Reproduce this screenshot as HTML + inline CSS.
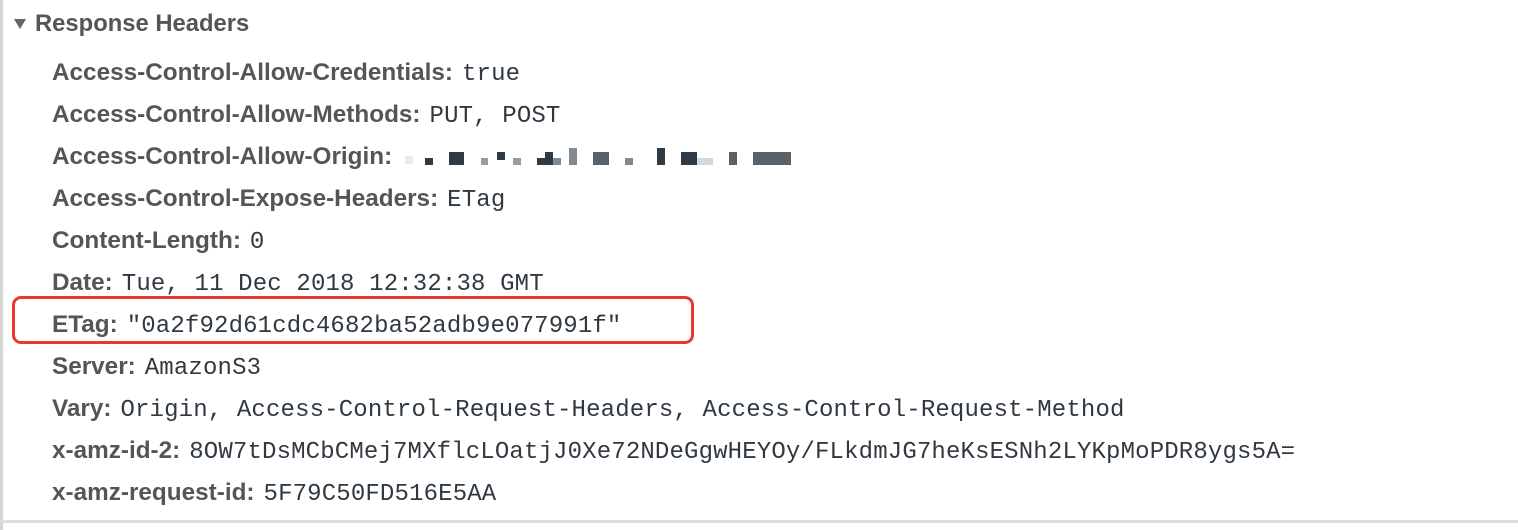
<!DOCTYPE html>
<html><head><meta charset="utf-8"><style>
html,body{margin:0;padding:0;background:#fff;}
body{width:1518px;height:530px;position:relative;overflow:hidden;}
.lb{position:absolute;left:0;top:0;width:3px;height:530px;background:#d6d6d6;}
.bl{position:absolute;left:0;top:520px;width:1518px;height:3px;background:#dedede;}
.hd{position:absolute;left:35px;top:9px;font:bold 23.8px "Liberation Sans",sans-serif;color:#555;line-height:30px;}
.tri{position:absolute;left:14px;top:19px;width:0;height:0;border-left:6px solid transparent;border-right:6px solid transparent;border-top:10px solid #666;}
.rows{position:absolute;left:52px;top:55px;}
.r{height:42px;line-height:42px;white-space:nowrap;}
.k{font:bold 24.3px "Liberation Sans",sans-serif;color:#555;}
.v{font:24px "Liberation Mono",monospace;color:#303942;margin-left:9px;letter-spacing:0.15px;}
.box{position:absolute;left:12px;top:296px;width:676px;height:42px;border:3px solid #e8392e;border-radius:9px;}
.blur{display:inline-block;vertical-align:middle;position:relative;width:400px;height:24px;margin-left:-7px;}
.blur i{position:absolute;background:#2f3a44;}
</style></head><body>
<div class="lb"></div>
<div class="tri"></div>
<div class="hd">Response Headers</div>
<div class="rows">
<div class="r"><span class="k">Access-Control-Allow-Credentials:</span><span class="v">true</span></div>
<div class="r"><span class="k">Access-Control-Allow-Methods:</span><span class="v">PUT, POST</span></div>
<div class="r"><span class="k">Access-Control-Allow-Origin:</span><span class="blur">
<i style="left:20px;top:8px;width:8px;height:8px;opacity:.1"></i>
<i style="left:40px;top:10px;width:8px;height:7px;opacity:1"></i>
<i style="left:64px;top:4px;width:15px;height:13px"></i>
<i style="left:96px;top:10px;width:7px;height:7px;opacity:.5"></i>
<i style="left:112px;top:4px;width:8px;height:8px"></i>
<i style="left:128px;top:10px;width:8px;height:7px;opacity:.5"></i>
<i style="left:152px;top:10px;width:16px;height:7px"></i>
<i style="left:160px;top:4px;width:8px;height:6px"></i>
<i style="left:168px;top:10px;width:8px;height:7px;opacity:.6"></i>
<i style="left:184px;top:0px;width:8px;height:17px;opacity:.6"></i>
<i style="left:208px;top:4px;width:16px;height:13px;opacity:.8"></i>
<i style="left:240px;top:10px;width:8px;height:7px;opacity:.6"></i>
<i style="left:272px;top:0px;width:8px;height:17px"></i>
<i style="left:296px;top:4px;width:16px;height:13px"></i>
<i style="left:312px;top:10px;width:16px;height:7px;opacity:.2"></i>
<i style="left:344px;top:4px;width:8px;height:13px;opacity:.8"></i>
<i style="left:368px;top:4px;width:38px;height:13px;opacity:.8"></i>
</span></div>
<div class="r"><span class="k">Access-Control-Expose-Headers:</span><span class="v">ETag</span></div>
<div class="r"><span class="k">Content-Length:</span><span class="v">0</span></div>
<div class="r"><span class="k">Date:</span><span class="v">Tue, 11 Dec 2018 12:32:38 GMT</span></div>
<div class="r"><span class="k">ETag:</span><span class="v">"0a2f92d61cdc4682ba52adb9e077991f"</span></div>
<div class="r"><span class="k">Server:</span><span class="v">AmazonS3</span></div>
<div class="r"><span class="k">Vary:</span><span class="v">Origin, Access-Control-Request-Headers, Access-Control-Request-Method</span></div>
<div class="r"><span class="k">x-amz-id-2:</span><span class="v">8OW7tDsMCbCMej7MXflcLOatjJ0Xe72NDeGgwHEYOy/FLkdmJG7heKsESNh2LYKpMoPDR8ygs5A=</span></div>
<div class="r"><span class="k">x-amz-request-id:</span><span class="v">5F79C50FD516E5AA</span></div>
</div>
<div class="box"></div>
<div class="bl"></div>
</body></html>
